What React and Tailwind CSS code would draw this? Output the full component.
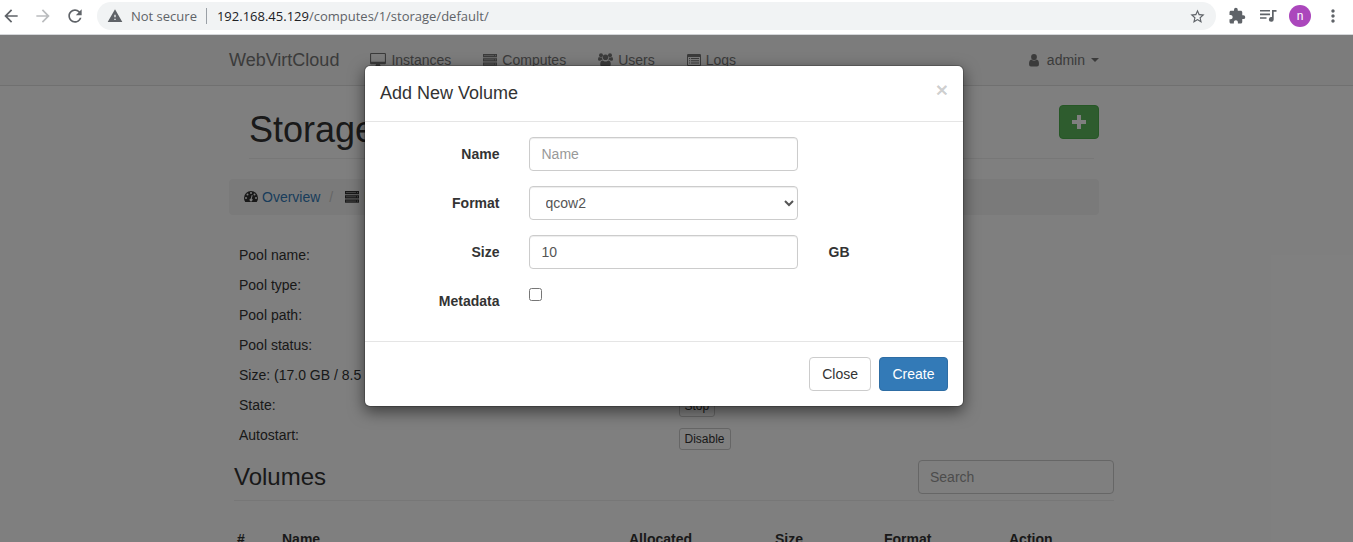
import React from 'react';
import {
  MdArrowBack, MdArrowForward, MdRefresh, MdWarning, MdStarBorder,
  MdExtension, MdMoreVert,
} from 'react-icons/md';

function DesktopIcon() {
  return (
    <svg viewBox="0 0 16 14" className="h-[14px] w-4" fill="currentColor" aria-hidden="true">
      <path fillRule="evenodd" d="M1.2 0h13.6Q16 0 16 1.2v8.9q0 1.2-1.2 1.2H10q0 .7.7 1.6v.4q0 .4-.4.4H5.7q-.4 0-.4-.4v-.4q.7-.9.7-1.6H1.2Q0 11.3 0 10.1V1.2Q0 0 1.2 0zM1.4 1q-.3 0-.3.3v7.1q0 .3.3.3h13.2q.3 0 .3-.3V1.3q0-.3-.3-.3z" />
    </svg>
  );
}

function ServerIcon() {
  return (
    <svg viewBox="0 0 14 12" className="h-3 w-[14px]" aria-hidden="true">
      <g fill="currentColor">
        <rect x="0" y="0" width="14" height="3.300" />
        <rect x="0" y="4.200" width="14" height="3.300" />
        <rect x="0" y="8.400" width="14" height="3.300" />
      </g>
      <g className="fill-white" opacity=".6">
        <rect x="1" y="1.300" width="10" height=".7" />
        <rect x="1" y="5.500" width="10" height=".7" />
        <rect x="1" y="9.700" width="10" height=".7" />
        <rect x="12" y="1.200" width="1" height=".9" />
        <rect x="12" y="5.400" width="1" height=".9" />
        <rect x="12" y="9.600" width="1" height=".9" />
      </g>
    </svg>
  );
}

function UsersIcon() {
  return (
    <svg viewBox="0 0 15 14" className="h-[14px] w-[15px]" fill="currentColor" aria-hidden="true">
      <circle cx="3" cy="2.200" r="2" />
      <circle cx="12" cy="2.200" r="2" />
      <circle cx="7.500" cy="4.200" r="2.800" />
      <path d="M4.3 6.700q-1.200 0-2 1H1.500Q0 7.700 0 6.500q0-2.500 1-2.500l.5.200q.7.400 1.500.4.500 0 1-.2 0 1.300.8 2.300zM10.700 6.700q1.200 0 2 1h.8Q15 7.700 15 6.500 15 4 14 4l-.5.200q-.7.400-1.500.4-.5 0-1-.2 0 1.300-.8 2.300zM4.700 7.400q.3 0 .9.500 1.900 1 3.800 0 .6-.5.900-.5 2.500 0 2.500 4.200 0 2-2.100 2H4.300q-2.100 0-2.100-2 0-4.200 2.500-4.200z" />
    </svg>
  );
}

function ListIcon() {
  return (
    <svg viewBox="0 0 14 12" className="h-3 w-[14px]" fill="currentColor" aria-hidden="true">
      <path fillRule="evenodd" d="M1.200 0h11.600Q14 0 14 1.200v9.600q0 1.200-1.200 1.200H1.200Q0 12 0 10.800V1.200Q0 0 1.200 0zM1 3v7.700q0 .3.3.3h11.400q.3 0 .3-.3V3z" />
      <path d="M2 4h1.100v1H2zM4 4h8v1H4zM2 6.200h1.100v1H2zM4 6.200h8v1H4zM2 8.500h1.100v1H2zM4 8.500h8v1H4z" />
    </svg>
  );
}

function UserIcon() {
  return (
    <svg viewBox="0 0 10 13" className="h-[13px] w-[10px]" fill="currentColor" aria-hidden="true">
      <ellipse cx="5" cy="3.100" rx="2.900" ry="3.100" />
      <path d="M2.500 5.500Q5 8.200 7.500 5.500 10 5.800 10 10.300q0 2.200-2 2.200H2q-2 0-2-2.200Q0 5.800 2.500 5.500z" />
    </svg>
  );
}

function GaugeIcon() {
  return (
    <svg viewBox="0 0 14 12" className="h-3 w-[14px]" aria-hidden="true">
      <path fill="currentColor" d="M7 0a7 7 0 0 1 7 7q0 2.100-1.100 3.800-.2.200-.4.200H1.500q-.3 0-.4-.2Q0 9.100 0 7a7 7 0 0 1 7-7z" />
      <g className="fill-[#f5f5f5]">
        <circle cx="2" cy="7" r="1" />
        <circle cx="3.500" cy="3.500" r="1" />
        <circle cx="7" cy="2" r="1" />
        <circle cx="10.500" cy="3.500" r="1" />
        <circle cx="12" cy="7" r="1" />
        <path d="M8.100 3.900q.6.100.5.600L7.800 7.600a1.500 1.500 0 1 1-1-.2l.8-3.100q.1-.4.500-.4z" />
      </g>
    </svg>
  );
}

function PlaylistIcon() {
  return (
    <svg viewBox="0 0 17 14" className="h-[14px] w-[17px]" fill="currentColor" aria-hidden="true">
      <path d="M0 1h10v1.600H0zM0 4.600h10v1.600H0zM0 8.200h6.500v1.600H0zM12 1h4.500v1.700h-2.800v7.600a2.400 2.400 0 1 1-1.700-2.200z" />
    </svg>
  );
}

function BrowserBar() {
  return (
    <header className="flex h-[35px] shrink-0 items-center border-b border-[#d5d7da] bg-white pb-[2px] text-[#5f6368]">
      <div className="flex w-[97px] items-center gap-3 pl-[1px]">
        <button type="button" aria-label="Back"><MdArrowBack size={20} /></button>
        <button type="button" aria-label="Forward" className="text-[#babcbe]"><MdArrowForward size={20} /></button>
        <button type="button" aria-label="Reload"><MdRefresh size={20} /></button>
      </div>
      <div className="flex h-7 flex-1 items-center rounded-full bg-[#f1f3f4] px-[10px] font-['Open_Sans',sans-serif] text-[13px]">
        <MdWarning size={16} />
        <span className="ml-2">Not secure</span>
        <span className="mr-[10px] ml-[9px] h-4 w-px bg-[#9aa0a6]" />
        <span className="flex-1"><span className="text-[#202124]">192.168.45.129</span>/computes/1/storage/default/</span>
        <button type="button" aria-label="Bookmark this page"><MdStarBorder size={17} /></button>
      </div>
      <div className="flex items-center pr-[10px] pl-[12px]">
        <button type="button" aria-label="Extensions"><MdExtension size={18} /></button>
        <button type="button" aria-label="Media controls" className="ml-[14px]"><PlaylistIcon /></button>
        <button type="button" aria-label="Profile" className="ml-3 h-[22px] w-[22px] rounded-full bg-[#ab47bc] text-[12px] leading-[20px] text-white">n</button>
        <button type="button" aria-label="Menu" className="ml-3"><MdMoreVert size={20} /></button>
      </div>
    </header>
  );
}

const navItems = [
  { label: 'Instances', Icon: DesktopIcon },
  { label: 'Computes', Icon: ServerIcon },
  { label: 'Users', Icon: UsersIcon },
  { label: 'Logs', Icon: ListIcon },
];

function NavBar() {
  return (
    <nav className="border-b border-[#e0e0e0] bg-[#f8f8f8] pr-[25px] text-[#777]">
      <div className="mx-auto flex h-[50px] max-w-[870px] items-center">
        <a href="#" className="mr-4 text-[18px]">WebVirtCloud</a>
        {navItems.map(({ label, Icon }) => (
          <a key={label} href="#" className="flex items-center gap-[5px] pr-[17px] pl-[15px]"><Icon />{label}</a>
        ))}
        <a href="#" className="ml-auto flex items-center">
          <UserIcon />
          <span className="ml-2">admin</span>
          <span className="ml-[6px] border-x-4 border-t-4 border-x-transparent border-t-current" />
        </a>
      </div>
    </nav>
  );
}

const poolLabels = [
  'Pool name:', 'Pool type:', 'Pool path:', 'Pool status:',
  'Size: (17.0 GB / 8.5 GB)', 'State:', 'Autostart:',
];

function StoragePage() {
  return (
    <main className="pt-[19px] pr-[25px]">
      <div className="mx-auto max-w-[870px]">
        <div className="flex">
          <h1 className="ml-5 flex-1 border-b border-[#eee] pt-[2px] pb-[5px] text-[36px] leading-[46px]">Storage: default</h1>
          <div className="-ml-[35px] w-10">
            <button type="button" aria-label="Add volume" className="flex h-[34px] w-10 items-center justify-center rounded border border-[#4cae4c] bg-[#5cb85c] text-white">
              <svg viewBox="0 0 14 14" className="h-[14px] w-[14px]" fill="currentColor" aria-hidden="true"><path d="M5 0h4v5h5v4H9v5H5V9H0V5h5z" /></svg>
            </button>
          </div>
        </div>
        <div className="mt-5 flex h-9 items-center rounded bg-[#f5f5f5] px-[15px]">
          <GaugeIcon />
          <a href="#" className="ml-[4px] text-[#337ab7]">Overview</a>
          <span className="mx-[9px] text-[#ccc]">/</span>
          <span className="ml-[3px] flex items-center gap-[5px] text-[#333]"><ServerIcon />Networks</span>
        </div>
        <div className="mt-[25px] grid grid-cols-2 gap-[5px] px-[10px]">
          <div>
            {poolLabels.map((label) => <p key={label} className="leading-[30px]">{label}</p>)}
          </div>
          <div className="flex flex-col items-start justify-end gap-[11px] pl-[12px]">
            {['Stop', 'Disable'].map((action) => (
              <button key={action} type="button" className="h-[22px] rounded-[3px] border border-[#ccc] bg-white px-[5px] text-[12px] leading-[20px]">{action}</button>
            ))}
          </div>
        </div>
        <section className="-mr-[15px] pl-[5px]">
          <div className="mt-[10px] flex items-start border-b border-[#eee] pb-[6px]">
            <h3 className="flex-1 text-[24px] leading-[34px]">Volumes</h3>
            <input type="search" aria-label="Search" placeholder="Search" className="h-[34px] w-[196px] rounded border border-[#ccc] bg-white px-[11px] placeholder:text-[#999]" />
          </div>
          <table className="mt-7 w-full table-fixed text-left">
            <thead>
              <tr>
                <th className="w-[45px] pl-[3px]">#</th>
                <th className="w-[347px] pl-[3px]">Name</th>
                <th className="w-[146px] pl-[3px]">Allocated</th>
                <th className="w-[109px] pl-[3px]">Size</th>
                <th className="w-[125px] pl-[3px]">Format</th>
                <th className="pl-[3px]">Action</th>
              </tr>
            </thead>
          </table>
        </section>
      </div>
    </main>
  );
}

const fieldClass = 'col-span-2 mr-4 ml-[14px] h-[34px] rounded border border-[#ccc] bg-white px-3 text-[#555] placeholder:text-[#999] shadow-[inset_0_1px_1px_rgba(0,0,0,0.075)]';
const labelClass = 'pt-[7px] pr-[15px] text-right font-bold';

function AddVolumeDialog() {
  return (
    <form role="dialog" aria-labelledby="dialog-title" className="mx-auto w-full max-w-[600px] rounded-md border border-black/20 bg-white bg-clip-padding shadow-[0_5px_15px_rgba(0,0,0,0.5)]" onSubmit={(e) => e.preventDefault()}>
      <div className="flex items-start justify-between border-b border-[#e5e5e5] px-[15px] py-[15px]">
        <h4 id="dialog-title" className="text-[18px] leading-[25px]">Add New Volume</h4>
        <button type="button" aria-label="Dismiss" className="text-[21px] leading-[18px] font-bold text-black/20">×</button>
      </div>
      <div className="grid gap-[15px] pt-[15px] pb-[30px]">
        <div className="grid grid-cols-4">
          <label htmlFor="name" className={labelClass}>Name</label>
          <input id="name" type="text" placeholder="Name" className={fieldClass} />
        </div>
        <div className="grid grid-cols-4">
          <label htmlFor="format" className={labelClass}>Format</label>
          <select id="format" defaultValue="qcow2" className={fieldClass}>
            <option>qcow2</option>
            <option>raw</option>
          </select>
        </div>
        <div className="grid grid-cols-4">
          <label htmlFor="size" className={labelClass}>Size</label>
          <input id="size" type="text" defaultValue="10" className={fieldClass} />
          <span className="pt-[7px] pl-[15px] font-bold">GB</span>
        </div>
        <div className="grid grid-cols-4">
          <label htmlFor="metadata" className={labelClass}>Metadata</label>
          <input id="metadata" type="checkbox" className="mt-1 ml-[14px] h-[13px] w-[13px]" />
        </div>
      </div>
      <div className="flex justify-end gap-2 border-t border-[#e5e5e5] p-[15px]">
        <button type="button" className="h-[34px] rounded border border-[#ccc] bg-white px-3">Close</button>
        <button type="submit" className="h-[34px] min-w-[69px] rounded border border-[#2e6da4] bg-[#337ab7] px-3 text-white">Create</button>
      </div>
    </form>
  );
}

export default function App() {
  return (
    <div className="flex h-screen flex-col overflow-hidden bg-white font-['Liberation_Sans',Arial,sans-serif] text-[14px] leading-5 text-[#333]">
      <BrowserBar />
      <div className="relative min-h-0 flex-1 overflow-hidden">
        <NavBar />
        <StoragePage />
        <div className="absolute inset-0 bg-black/50 pt-[30px] pr-[25px]">
          <AddVolumeDialog />
        </div>
      </div>
    </div>
  );
}
